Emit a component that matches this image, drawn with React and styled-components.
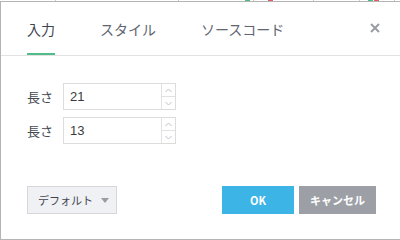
import React from 'react';
import styled, { createGlobalStyle } from 'styled-components';

const GlobalStyle = createGlobalStyle`
  html, body {
    margin: 0;
    padding: 0;
    background: #ffffff;
  }
  body {
    font-family: "Noto Sans CJK JP", "Liberation Sans", sans-serif;
  }
`;

const Page = styled.div`
  width: 400px;
  height: 240px;
  overflow: hidden;
  display: flex;
  flex-direction: column;
`;

// bits of the page behind the dialog peeking out on the first row
const BackdropStrip = styled.div`
  height: 1px;
  flex: none;
  background:
    linear-gradient(to right,
      transparent 55px, #c8c8c8 55px, #c8c8c8 56px, transparent 56px,
      transparent 178px, #c8c8c8 178px, #c8c8c8 179px, transparent 179px,
      transparent 245px, #4cbb86 245px, #4cbb86 250px, transparent 250px,
      transparent 253px, #f0b8bc 253px, #f0b8bc 254px, transparent 254px,
      transparent 268px, #e05a66 268px, #e05a66 273px, transparent 273px,
      transparent 313px, #c8c8c8 313px, #c8c8c8 314px, transparent 314px,
      transparent 359px, #f0b8bc 359px, #f0b8bc 360px, transparent 360px,
      transparent 368px, #4cbb86 368px, #4cbb86 373px, transparent 373px,
      transparent 374px, #e05a66 374px, #e05a66 379px, transparent 379px,
      transparent 394px, #f0b8bc 394px, #f0b8bc 395px, transparent 395px);
`;

const Dialog = styled.div`
  flex: none;
  height: 239px;
  box-sizing: border-box;
  border: 1px solid #b4b4b4;
  border-right: none;
  background: #fff;
  display: flex;
  flex-direction: column;
`;

const Header = styled.div`
  height: 54px;
  box-sizing: border-box;
  border-bottom: 1px solid #e2e2e2;
  display: flex;
  align-items: stretch;
  padding: 0 0 0 26px;
`;

const Tabs = styled.div`
  display: flex;
  gap: 45px;
  flex: 1;
`;

const Tab = styled.div`
  height: 53px;
  box-sizing: border-box;
  display: flex;
  align-items: center;
  padding-top: 3px;
  font-size: 14px;
  color: ${p => (p.$active ? '#3f4550' : '#60656f')};
  border-bottom: 2px solid ${p => (p.$active ? '#52bb8a' : 'transparent')};
`;

const CloseButton = styled.div`
  width: 48px;
  display: flex;
  align-items: flex-start;
  justify-content: center;
  padding-top: 21px;
  box-sizing: border-box;
  margin-right: 1px;
`;

const Body = styled.div`
  padding: 27px 0 0 26px;
  display: flex;
  flex-direction: column;
  gap: 7px;
`;

const FieldRow = styled.div`
  display: flex;
  align-items: center;
  gap: 10px;
`;

const Label = styled.span`
  font-size: 13px;
  color: #464a52;
  width: 26px;
`;

const NumberBox = styled.div`
  width: 113px;
  height: 27px;
  box-sizing: border-box;
  border: 1px solid #dcdcdc;
  display: flex;
`;

const NumberValue = styled.div`
  flex: 1;
  padding-left: 6px;
  display: flex;
  align-items: center;
  font-family: "Liberation Sans", Arial, sans-serif;
  font-size: 13px;
  color: #3a3a3a;
`;

const Spinner = styled.div`
  width: 13px;
  border-left: 1px solid #e2e2e2;
  display: flex;
  flex-direction: column;
`;

const SpinHalf = styled.div`
  flex: 1;
  display: flex;
  align-items: center;
  justify-content: center;
  & + & {
    border-top: 1px solid #e2e2e2;
  }
`;

const Footer = styled.div`
  margin-top: auto;
  margin-bottom: 25px;
  padding: 0 24px 0 26px;
  display: flex;
  align-items: center;
`;

const PresetButton = styled.div`
  width: 90px;
  height: 28px;
  box-sizing: border-box;
  background: #f0f1f5;
  border: 1px solid #d6d7db;
  display: flex;
  align-items: center;
  padding-left: 10px;
  gap: 8px;
  font-size: 11px;
  color: #40444c;
`;

const Caret = styled.span`
  width: 0;
  height: 0;
  border-left: 4px solid transparent;
  border-right: 4px solid transparent;
  border-top: 5px solid #9a9ca2;
`;

const Actions = styled.div`
  margin-left: auto;
  display: flex;
  gap: 5px;
`;

const ActionButton = styled.div`
  width: ${p => p.$width}px;
  height: 28px;
  display: flex;
  align-items: center;
  justify-content: center;
  background: ${p => p.$bg};
  color: #fff;
  font-weight: 700;
  font-size: 11px;
  font-family: "Noto Sans CJK JP", "Liberation Sans", sans-serif;
`;

const Chevron = ({ up }) => (
  <svg width="7" height="5" viewBox="0 0 7 5">
    <polyline
      points={up ? '0.5,4 3.5,1 6.5,4' : '0.5,1 3.5,4 6.5,1'}
      fill="none"
      stroke="#b9c2cc"
      strokeWidth="1"
    />
  </svg>
);

const NumberField = ({ label, value }) => (
  <FieldRow>
    <Label>{label}</Label>
    <NumberBox>
      <NumberValue>{value}</NumberValue>
      <Spinner>
        <SpinHalf><Chevron up /></SpinHalf>
        <SpinHalf><Chevron /></SpinHalf>
      </Spinner>
    </NumberBox>
  </FieldRow>
);

const App = () => (
  <>
    <GlobalStyle />
    <Page>
      <BackdropStrip />
      <Dialog>
        <Header>
          <Tabs>
            <Tab $active>入力</Tab>
            <Tab>スタイル</Tab>
            <Tab>ソースコード</Tab>
          </Tabs>
          <CloseButton>
            <svg width="10" height="10" viewBox="0 0 10 10">
              <path d="M1 1 L9 9 M9 1 L1 9" stroke="#9a9ca2" strokeWidth="2" />
            </svg>
          </CloseButton>
        </Header>
        <Body>
          <NumberField label="長さ" value="21" />
          <NumberField label="長さ" value="13" />
        </Body>
        <Footer>
          <PresetButton>
            デフォルト
            <Caret />
          </PresetButton>
          <Actions>
            <ActionButton $width={72} $bg="#3cb4e5">OK</ActionButton>
            <ActionButton $width={77} $bg="#9d9fa6">キャンセル</ActionButton>
          </Actions>
        </Footer>
      </Dialog>
    </Page>
  </>
);

export default App;
